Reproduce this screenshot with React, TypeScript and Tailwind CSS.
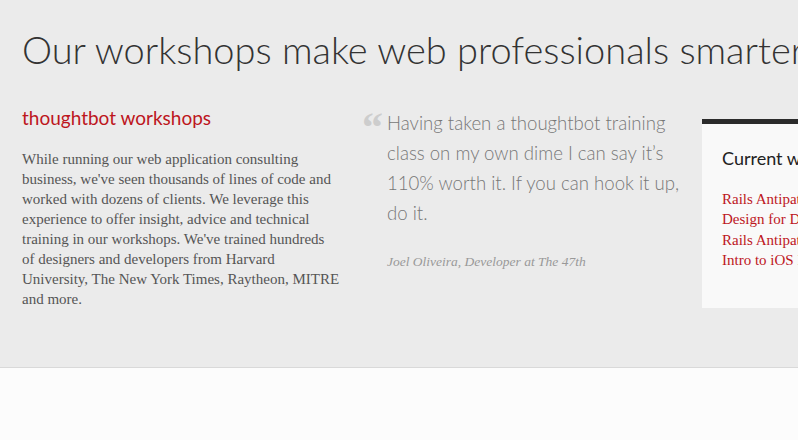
import React from 'react';

const bodyLines = [
  'While running our web application consulting',
  "business, we've seen thousands of lines of code and",
  'worked with dozens of clients. We leverage this',
  'experience to offer insight, advice and technical',
  "training in our workshops. We've trained hundreds",
  'of designers and developers from Harvard',
  'University, The New York Times, Raytheon, MITRE',
  'and more.',
];

const quoteLines = [
  'Having taken a thoughtbot training',
  'class on my own dime I can say it’s',
  '110% worth it. If you can hook it up,',
  'do it.',
];

const workshops = [
  'Rails Antipatterns',
  'Design for Developers',
  'Rails Antipatterns',
  'Intro to iOS Development',
];

const serif = "font-['Liberation_Serif',serif]";

export default function App() {
  return (
    <div className="w-[798px] h-[440px] overflow-hidden bg-[#fcfcfc]">
      <section className="h-[368px] bg-[#ebebeb] border-b border-[#d9d9d9] pl-[22px] pt-[25px]">
        <h1 className="whitespace-nowrap text-[38px] leading-[48px] font-light text-[#333] font-['Lato',sans-serif]">
          Our workshops make web professionals smarter
        </h1>

        <div className="mt-[33px] grid grid-cols-[318px_318px_318px] gap-x-[22px] items-start">
          <div>
            <h2 className="text-[19px] leading-[24px] text-[#bd161d] font-['Lato',sans-serif]">
              thoughtbot workshops
            </h2>
            <p className={`mt-[19px] text-[15px] leading-[20px] text-[#555] ${serif}`}>
              {bodyLines.map((l, i) => (
                <span key={i} className="block whitespace-nowrap">{l}</span>
              ))}
            </p>
          </div>

          <div className="relative pl-[25px] pt-[2px]">
            <span className="absolute left-0 top-[-3px] text-[42px] leading-[48px] text-[#cdcdcd] font-['Georgia','Liberation_Serif',serif] font-bold">
              “
            </span>
            <blockquote className="text-[18.6px] leading-[30px] font-light text-[#777] font-['Lato',sans-serif]">
              {quoteLines.map((l, i) => (
                <span key={i} className="block whitespace-nowrap">{l}</span>
              ))}
            </blockquote>
            <p className={`mt-[24px] italic text-[13.5px] leading-[20px] text-[#999] ${serif}`}>
              Joel Oliveira, Developer at The 47th
            </p>
          </div>

          <div className="mt-[13px] h-[189px] bg-[#f9f9f9] border-t-[5px] border-[#2b2b2b] px-[20px] pt-[22px]">
            <h3 className="text-[18px] leading-[24px] text-[#222] font-['Lato',sans-serif]">
              Current workshops
            </h3>
            <ul className={`mt-[19px] text-[15px] leading-[20.3px] text-[#bd161d] ${serif}`}>
              {workshops.map((w, i) => (
                <li key={i} className="whitespace-nowrap">{w}</li>
              ))}
            </ul>
          </div>
        </div>
      </section>
    </div>
  );
}
